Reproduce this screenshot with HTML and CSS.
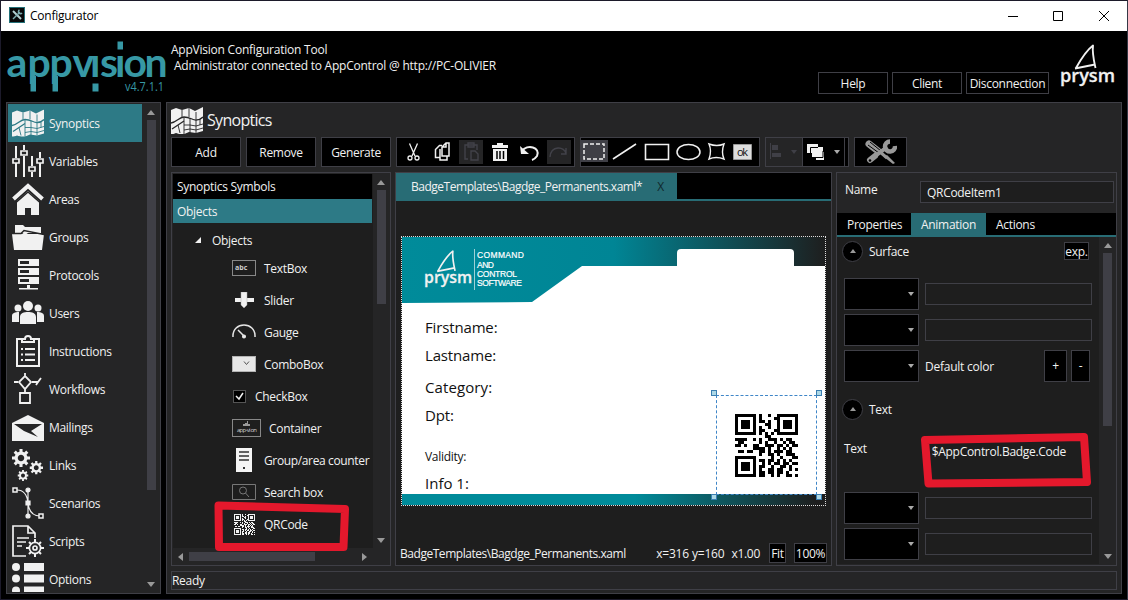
FILE: index.html
```html
<!DOCTYPE html>
<html lang="en">
<head>
<meta charset="utf-8">
<title>Configurator</title>
<link rel="stylesheet" href="styles.css">
</head>
<body>
<svg class="defs" width="0" height="0">
  <symbol id="map" viewBox="0 0 32 27">
    <path fill="#f1f1f1" d="M0 3 5 1l6 2 7-2 6 3 8-4v24l-7 2-7-1-7 3-6-2-5 2z"/>
    <path fill="none" stroke="var(--ink)" stroke-width="1.300" d="M0 16c6-1 8-6 13-6 6 0 8 3 12 3 3 0 5-1 7-3M1 22l12-8"/>
    <path fill="none" stroke="var(--ink)" stroke-width=".9" d="M11 3v7M18 1v9M25 5v7M13 10v17M19 11v15M25 13v13M13 18h6l6 1 7-2M13 23l6-1 6 1 7-2M29 12v6M7 18l2 8"/>
  </symbol>
  <symbol id="gear" viewBox="-10 -10 20 20">
    <circle r="5.400" fill="none" stroke="#f1f1f1" stroke-width="3.600"/>
    <path stroke="#f1f1f1" stroke-width="3.400" d="M0-10v4M0 6v4M-10 0h4M6 0h4M-7-7l3 3M4 4l3 3M7-7l-3 3M-4 4l-3 3"/>
  </symbol>
  <symbol id="prysm" viewBox="0 0 56 46">
    <path fill="none" stroke="#f1f1f1" stroke-width="1.900" stroke-linejoin="round" d="M16 24C21 15 27 6 33 1.500C32 9 34 17 35.500 24M15 24.500 35 20.500"/>
    <text x="0" y="38" textLength="55" lengthAdjust="spacingAndGlyphs" class="prysm-word">prysm</text>
  </symbol>
  <symbol id="tools" viewBox="0 0 32 26">
    <path stroke="currentColor" stroke-width="7" stroke-linecap="round" d="M4 5 13 12"/>
    <path stroke="#000" stroke-width="1" d="M3 6l11 8M5 3l11 9"/>
    <path stroke="currentColor" stroke-width="3" d="M14 12l8 7"/>
    <path fill="currentColor" d="m19 18 3-2 8 8-2 1z"/>
    <path stroke="currentColor" stroke-width="6" stroke-linecap="round" d="M5 21 10 17"/>
    <path stroke="currentColor" stroke-width="4" d="M9 18 22 8"/>
    <path fill="none" stroke="currentColor" stroke-width="4.500" d="M25 2.500a5 5 0 1 0 5 4.500"/>
    <circle cx="5" cy="21.500" r="1.300" fill="#000"/>
  </symbol>
</svg>
<div class="window">
  <header class="titlebar">
    <svg class="app-icon" width="16" height="16" viewBox="0 0 16 16"><rect width="16" height="16" fill="#237079"/><rect x="1" y="1" width="14" height="14" fill="#08090a"/><path stroke="#b5d2d4" stroke-width="2" d="m4 4 8 8"/><path stroke="#7cacb0" stroke-width="1.500" d="m4 12 7-7"/><path fill="none" stroke="#7cacb0" stroke-width="1.500" d="M10.500 3a2 2 0 1 0 2.500 3"/></svg>
    <span class="grow t-title">Configurator</span>
    <svg width="104" height="12" viewBox="0 0 104 12" fill="none" stroke="#000"><path d="M0 6.500h10M45.500 1.500h9v9h-9zM91 1l10 10M101 1 91 11"/></svg>
  </header>

  <div class="banner">
    <svg class="logo" width="160" height="56" viewBox="0 0 160 56">
      <text x="-1.500 19.500 41.500 64.500 82 92 107 115.500 136.500" y="38.500" class="logo-word">appvision</text>
      <path fill="#000" d="M82 0h11v16H82zM106 0h11v16h-11z"/>
      <path fill="#3798a5" d="M84.500 45.500h6v8h-6zM109.500 3.500h5.500v8h-5.500zM22.500 38h5.500v15.500h-5.500zM44.500 38h5.500v15.500h-5.500z"/>
      <text x="117" y="53" class="logo-version" textLength="39" lengthAdjust="spacingAndGlyphs">v4.7.1.1</text>
    </svg>
    <div class="banner-text grow"><div class="w-a">AppVision Configuration Tool</div><div class="w-b">Administrator connected to AppControl @ http://PC-OLIVIER</div></div>
    <div class="banner-buttons"><button>Help</button><button>Client</button><button class="wide">Disconnection</button></div>
    <svg class="prysm" width="56" height="46"><use href="#prysm"/></svg>
  </div>

  <div class="body">
    <nav class="sidebar">
      <ul class="menu">
        <li class="active"><svg viewBox="0 0 32 32"><use href="#map" y="2.500" width="32" height="27"/></svg>Synoptics</li>
        <li><svg viewBox="0 0 32 32" fill="none" stroke="#f1f1f1" stroke-width="2"><path d="M4 1v12M4 18v14M12 0v5M12 11v21M20 11v10M20 27v5M28 7v6M28 18v14"/><path stroke-width="1.700" d="M1 14h6v4H1zM9 6h6v4H9zM17 22h6v4h-6zM25 14h6v4h-6z"/></svg>Variables</li>
        <li><svg viewBox="0 0 32 32"><path fill="#f1f1f1" d="M5 18 16 8l11 10v14h-8v-7h-6v7H5z"/><path fill="none" stroke="#252526" stroke-width="1.500" d="M4 19.500 16 9l12 10.500"/><path fill="none" stroke="#f1f1f1" stroke-width="4" d="M1.500 16 16 3 30.500 16"/></svg>Areas</li>
        <li><svg viewBox="0 0 32 32" fill="#f1f1f1"><path d="M3 4h8l2 2h16v6H3z"/><path d="M0 13h10l3-2 3 2h16l-2 16H2z"/><path fill="none" stroke="#252526" stroke-width="1.500" d="M0 12.500h9l3-3 20 4"/></svg>Groups</li>
        <li><svg viewBox="0 0 32 32"><path fill="#f1f1f1" d="M6 0h21v7H6zM6 9h21v7H6zM6 18h21v7H6zM15 26h3v3h8v1.500H7V29h8z"/><path fill="#252526" d="M8 2h9v3H8zM8 11h9v3H8zM8 20h9v3H8z"/></svg>Protocols</li>
        <li><svg viewBox="0 0 32 32" fill="#f1f1f1"><circle cx="6" cy="11" r="3.500"/><circle cx="26" cy="11" r="3.500"/><circle cx="16" cy="9" r="5"/><path d="M0 25v-6c0-3 3-4 7-4v10zM25 25V15c4 0 7 1 7 4v6zM8 27v-7c0-4 4-5 8-5s8 1 8 5v7z"/></svg>Users</li>
        <li><svg viewBox="0 0 32 32" fill="none" stroke="#f1f1f1" stroke-width="2"><path d="M10 4H5v27h22V4h-5"/><path d="M10 7V4h3c0-4 6-4 6 0h3v3zM9 14h2M9 19.500h2M9 25h2M13 14h10M13 19.500h10M13 25h10"/></svg>Instructions</li>
        <li><svg viewBox="0 0 32 32" fill="none" stroke="#f1f1f1" stroke-width="1.800"><path d="M13 0v3M2 9h4M20 9h6l3-4M24 12l2-3M13 16v4M13 3l6 6-6 7-6-7zM8 20h10v10H8z"/></svg>Workflows</li>
        <li><svg viewBox="0 0 32 32" fill="#f1f1f1"><path d="M0 12 16 4l16 8v18H0z"/><path fill="#252526" d="M2 13h28L19 20l7 6-14-6z"/></svg>Mailings</li>
        <li><svg viewBox="0 0 32 32"><use href="#gear" width="18" height="18"/><use href="#gear" x="17.500" y="12" width="13.500" height="13.500"/><use href="#gear" x="5.500" y="21" width="11" height="11"/></svg>Links</li>
        <li><svg viewBox="0 0 32 32" fill="none" stroke="#f1f1f1" stroke-width="1.200"><path d="M5 3c6 0 10 4 11 13s5 13 12 13M16 3v27"/><path d="M1 1h4v4H1zM27 27h4v4h-4z" fill="#252526" stroke-width="1.500"/><g fill="#f1f1f1"><circle cx="16" cy="3" r="2"/><circle cx="16" cy="29" r="2"/><path d="M14 14h4v4h-4z"/></g></svg>Scenarios</li>
        <li><svg viewBox="0 0 32 32" fill="none" stroke="#f1f1f1" stroke-width="1.700"><path d="M14 31H1V1h15l7 7v5M16 1v7h7M5 13h12M5 17h9M5 21h5"/><circle cx="23" cy="23" r="5.600"/><circle cx="23" cy="23" r="2"/><path stroke-width="2" d="M23 14v3M23 29v3M14 23h3M29 23h3M17 17l2 2M27 27l2 2M29 17l-2 2M17 29l2-2"/></svg>Scripts</li>
        <li><svg viewBox="0 0 32 32" fill="#f1f1f1"><circle cx="4" cy="4" r="4"/><circle cx="4" cy="15.500" r="4"/><circle cx="4" cy="27.500" r="4"/><path d="M12 0h20v8H12zM12 11.500h20v8H12zM12 23.500h20v8H12z"/></svg>Options</li>
      </ul>
      <div class="vscroll"><i class="up"></i><b></b><i class="down"></i></div>
    </nav>

    <main class="main">
      <h1><svg width="32" height="27"><use href="#map"/></svg><span>Synoptics</span></h1>
      <div class="toolbar">
        <button class="cmd">Add</button><button class="cmd">Remove</button><button class="cmd">Generate</button>
        <svg class="group" width="179" height="30" viewBox="0 0 179 30" fill="none" stroke="#f1f1f1">
          <g stroke-width="1.300"><path d="M13.500 6.500 19 19M21.500 6.500 16 19"/><circle cx="14" cy="21" r="2"/><circle cx="21" cy="21" r="2"/></g>
          <g stroke-width="1.500"><path d="M44 20.500h-4.500v-8l4-4H46"/><path d="M46 19V10l4-4h3v13zM50 6.500V10h-4M44 12v11h7v-4"/></g>
          <path fill="#252526" stroke="none" d="M63 3h24v24H63zM151 3h24v24h-24z"/>
          <g stroke="#424249" stroke-width="1.400"><path d="M72 22h-3V8h12v5M72 10V6h6v4zM75 14h4l3 3v6h-7z"/><path d="M154 20c1-12 15-11 16-3m-5 0h5v-6"/></g>
          <path fill="#f1f1f1" stroke="none" d="M96 8h5V6h6v2h5v3H96zM97 12h14v12H97z"/><path stroke="#000" stroke-width="1.500" d="M101 14v8M104 14v8M107.500 14v8"/>
          <path stroke-width="2" d="M126 14c5-7 19-4 15 5q-2 3-5 4"/><path fill="#f1f1f1" stroke="none" d="m124 9 1 8h8z"/>
        </svg>
        <svg class="group" width="180" height="30" viewBox="0 0 180 30" fill="none" stroke="#f1f1f1">
          <path fill="#3f3f46" stroke="none" d="M1 3h27v22H1z"/><path stroke-width="1.500" stroke-dasharray="4 2" d="M4 7h20v15H4z"/>
          <path stroke-width="1.600" d="m33 22 23-15"/><path stroke-width="1.600" d="M65.500 7.500h23v15h-23z"/><ellipse cx="108.500" cy="15" rx="11.500" ry="7.500" stroke-width="1.500"/>
          <path stroke-width="1.400" d="M129 7q8 3 15 0-3 8 0 15-8-3-15 0 3-8 0-15z"/>
          <path fill="#ddd" stroke="#999" d="M153.500 7.500h18v15h-18z"/><text x="157" y="19" textLength="11" class="ok">ok</text>
        </svg>
        <svg class="group" width="84" height="30" viewBox="0 0 84 30">
          <path fill="#252526" d="M0 0h37v30H0z"/><path fill="#3f3f46" d="M37 0h1v30h-1zM79 0h1v30h-1zM5 6h1v16H5zM7 8h6v5H7zM7 16h9v4H7zM26 13h6l-3 4z"/>
          <path fill="#f1f1f1" d="M42 7h11v3h5v5h1v8h-8v-3h-4v-4h-5z"/><path fill="none" stroke="#000" d="M45.500 16v-5.500H53M50.500 20.500h7.500V14"/><path fill="#aaa" d="M69 13h6l-3 4z"/>
        </svg>
        <div class="group tools"><svg width="32" height="26"><use href="#tools"/></svg></div>
      </div>

      <div class="work">
        <section class="tree">
          <div class="tree-main">
            <div class="tree-head">Synoptics Symbols</div>
            <div class="tree-head sel">Objects</div>
            <div class="tree-root"><svg width="6" height="6"><path fill="#f1f1f1" d="M6 0v6H0z"/></svg>Objects</div>
            <ul class="items">
              <li><svg width="24" height="16"><rect x=".5" y=".5" width="23" height="15" fill="none" stroke="#888"/><text x="3" y="10" class="abc">abc</text></svg>TextBox</li>
              <li><svg width="24" height="16" fill="#f1f1f1"><path d="M3 6h19v4H3z"/><path stroke="#aaa" stroke-width=".5" d="M9 0h6v13l-3 3-3-3z"/></svg>Slider</li>
              <li><svg width="24" height="16" fill="none" stroke="#e5e5e5" stroke-width="1.500"><path d="M1 13C0-3 24-3 23 13M6 6l6 6"/><circle cx="12" cy="12.500" r="1.300" fill="#f1f1f1"/></svg>Gauge</li>
              <li><svg width="24" height="16"><rect x=".5" y=".5" width="23" height="15" fill="#e7e7e7" stroke="#b3b3b3"/><path fill="none" stroke="#555" d="m12 5.500 2.500 3 2.500-3"/></svg>ComboBox</li>
              <li class="check"><svg width="15" height="15"><rect x="1.500" y="1.500" width="12" height="12" fill="#000" stroke="#555"/><path fill="none" stroke="#f1f1f1" stroke-width="1.500" d="m4 7 3 3 4-6"/></svg>CheckBox</li>
              <li class="container"><svg width="29" height="18"><rect x=".5" y=".5" width="28" height="17" fill="none" stroke="#888"/><path fill="#999" d="M11 7v-2h2v-1h2V2h1v3h2v2z"/><text x="5" y="13" class="tiny" textLength="20">app-vi on</text></svg>Container</li>
              <li><svg width="24" height="24"><path fill="#f5f5f5" d="M4 0h16v24H4z"/><path stroke="#333" stroke-width="1.500" d="M7 4h10M7 8h10M7 12h10"/><path fill="#333" d="M11 19h2v2h-2z"/></svg>Group/area counter</li>
              <li><svg width="24" height="16" fill="none" stroke="#777"><path d="M.5.500h23v15H.5z"/><circle cx="11" cy="6.500" r="3.500"/><path d="m13.500 9 3.500 4"/></svg>Search box</li>
              <li><svg width="24" height="21" viewBox="0 0 24 21"><use href="#qr" x="2" y="0" width="21" height="21"/></svg>QRCode</li>
            </ul>
          </div>
          <div class="vscroll tree-v"><i class="up"></i><b></b><i class="down"></i></div>
          <div class="hscroll"><i class="left"></i><b></b><i class="right"></i></div>
        </section>

        <section class="editor">
          <div class="doc-tabs"><div class="doc-tab"><span>BadgeTemplates\Bagdge_Permanents.xaml*</span><em>X</em></div></div>
          <div class="canvas">
            <div class="badge">
              <svg class="badge-top" width="423" height="67" viewBox="0 0 423 67">
                <defs><linearGradient id="fade"><stop offset="0" stop-color="#008b9a"/><stop offset=".5" stop-color="#008595"/><stop offset="1" stop-color="#1e1e1e"/></linearGradient></defs>
                <path fill="url(#fade)" d="M0 0h424v29H180l-50 36-130 1z"/>
                <path fill="#fff" d="M275 30V16q0-4 4-4h109q4 0 4 4v14z"/>
                <use href="#prysm" x="22" y="12" width="49" height="42"/>
                <path stroke="#9fd0d6" d="M72.500 12v41"/>
                <g class="tagline"><text x="75" y="21" textLength="47">COMMAND</text><text x="75" y="30.500" textLength="17">AND</text><text x="75" y="39.500" textLength="40">CONTROL</text><text x="75" y="49" textLength="45">SOFTWARE</text></g>
              </svg>
              <div class="fields"><p>Firstname:</p><p>Lastname:</p><p class="cat">Category:</p><p>Dpt:</p><p class="small">Validity:</p><p class="info">Info 1:</p></div>
              <div class="strip"></div>
              <div class="qr-item">
                <svg width="63" height="63" viewBox="0 0 21 21" shape-rendering="crispEdges"><use href="#qr" width="21" height="21" class="qr-dark"/></svg>
                <i></i><i></i><i></i><i></i>
              </div>
            </div>
          </div>
          <div class="doc-status"><span class="grow path">BadgeTemplates\Bagdge_Permanents.xaml</span><span class="xy">x=316 y=160</span><span class="zoom">x1.00</span><button>Fit</button><button class="pct">100%</button></div>
        </section>

        <section class="props">
          <div class="name-row"><label>Name</label><div class="input">QRCodeItem1</div></div>
          <div class="tabs"><span>Properties</span><span class="on">Animation</span><span>Actions</span></div>
          <div class="prop-area">
            <div class="prop-list">
              <div class="sect"><i class="circle"></i><span class="grow">Surface</span><button>exp.</button></div>
              <div class="row first"><div class="combo"></div><div class="input"></div></div>
              <div class="row"><div class="combo"></div><div class="input"></div></div>
              <div class="row"><div class="combo"></div><span class="grow default">Default color</span><button class="plus">+</button><button class="minus">-</button></div>
              <div class="sect text"><i class="circle"></i><span>Text</span></div>
              <div class="text-row"><span>Text</span><span class="value">$AppControl.Badge.Code</span></div>
              <div class="row"><div class="combo"></div><div class="input"></div></div>
              <div class="row"><div class="combo"></div><div class="input"></div></div>
            </div>
            <div class="vscroll prop-v"><i class="up"></i><b></b><i class="down"></i></div>
          </div>
        </section>
      </div>
      <footer>Ready</footer>
    </main>
  </div>
</div>
<svg class="marks" width="1128" height="600" fill="none" stroke="#e4182c" stroke-width="8" stroke-linejoin="round"><path d="M218.500 505.500 345 509l-1.500 38H219z"/><path d="M925 440l159-3 3 45-158.500 1.500z"/></svg>
<svg class="defs" width="0" height="0"><symbol id="qr" viewBox="0 0 21 21"><g id="qr-cells"></g></symbol></svg>
<script src="qr.js"></script>
</body>
</html>
```
FILE: styles.css
```css
* { box-sizing: border-box; }
body { margin: 0; width: 1128px; height: 600px; overflow: hidden; background: #000; color: #f1f1f1; font: 12px/16px "Open Sans", "Noto Sans", sans-serif; letter-spacing: -0.3px; }
ul, p, h1 { margin: 0; padding: 0; list-style: none; font-weight: 400; }
button { background: #000; color: #f1f1f1; border: 1px solid #3f3f46; font: inherit; letter-spacing: inherit; padding: 0; }
svg { display: block; flex: none; }
.defs { position: absolute; }
.grow { flex: 1; }
.window { width: 1128px; height: 600px; border: 1px solid #1c1a2a; border-right-color: #353846; display: flex; flex-direction: column; }
.titlebar { height: 30px; background: #fff; color: #000; display: flex; align-items: center; gap: 5px; padding: 0 15px 1px 8px; }
.app-icon { margin-top: -1px; }
.t-title { letter-spacing: -0.25px; }
.banner { height: 71px; display: flex; }
.logo { margin: 7px 0 0 7px; overflow: visible; }
.logo-word { font: 700 41px Lato, sans-serif; letter-spacing: 0; fill: #3798a5; }
.logo-version { font-size: 12px; letter-spacing: 0; fill: #3798a5; }
.banner-text { padding: 11px 0 0 3px; letter-spacing: -0.23px; }
.w-b { padding-left: 3px; }
.banner-buttons { display: flex; gap: 4px; padding-top: 41px; }
.banner-buttons button { width: 70px; height: 22px; padding-top: 2px; }
.banner-buttons .wide { width: 83px; }
.prysm { margin: 13px 11px 0 11px; overflow: visible; }
.prysm-word { font: 600 18px "Open Sans", sans-serif; letter-spacing: 0; fill: #f1f1f1; stroke: #f1f1f1; stroke-width: .3; }
.body { display: flex; gap: 5px; padding-left: 5px; height: 492px; }
.sidebar { width: 155px; border: 1px solid #3f3f46; background: #252526; display: flex; padding: 1px; gap: 1px; }
.menu { width: 134px; flex: none; height: 488px; overflow: hidden; }
.menu li { height: 38px; display: flex; align-items: center; gap: 5px; padding: 1px 0 0 4px; --ink: #252526; }
.menu li svg { width: 32px; height: 32px; margin-top: -1px; }
.menu .active { background: #2d7a86; --ink: #2d7a86; }
.vscroll { width: 17px; display: flex; flex-direction: column; align-items: center; padding: 6px 0 5px; background: #252526; }
.vscroll b { width: 9px; height: 370px; margin-top: 5px; background: #3f3f46; }
.up, .down { border: 4.5px solid transparent; border-top: 0; border-bottom: 5px solid #999; }
.down { border-bottom: 0; border-top: 5px solid #999; margin-top: auto; }
.main { width: 956px; border: 1px solid #3f3f46; background: #252526; padding: 0 4px; --ink: #252526; }
h1 { height: 34px; display: flex; align-items: center; gap: 4px; font-size: 16px; letter-spacing: -0.55px; }
h1 span { letter-spacing: -0.7px; }
.toolbar { display: flex; gap: 5px; height: 30px; margin-bottom: 5px; }
.cmd { width: 70px; padding-top: 2px; }
.group { background: #000; outline: 1px solid #3f3f46; outline-offset: -1px; }
.tools { width: 53px; display: grid; place-items: center; color: #999; }
.ok { font: 11px "Open Sans", sans-serif; fill: #111; stroke: none; letter-spacing: 0; }
.work { display: flex; gap: 4px; height: 394px; }
.tree { width: 220px; border: 1px solid #3f3f46; padding: 1px 0 0 1px; display: grid; grid-template: 374px 17px / 200px 16px; }
.tree-main { background: #1e1e1e; overflow: hidden; }
.tree-head { height: 25px; width: 199px; background: #000; padding: 5px 4px; }
.sel { background: #2d7a86; height: 24px; }
.tree-root { display: flex; align-items: center; gap: 11px; height: 29px; padding: 6px 0 0 22px; }
.tree-root svg { margin-top: -2px; }
.items li { height: 32px; display: flex; align-items: center; gap: 8px; padding: 2px 0 0 59px; white-space: nowrap; }
.items li svg { margin-top: -2px; }
.items .check { gap: 8px; }
.items li:nth-child(7) { letter-spacing: -0.36px; }
.abc { font: 700 7px "Open Sans", sans-serif; letter-spacing: 0; fill: #ccc; }
.tiny { font: 6px "Open Sans", sans-serif; letter-spacing: 0; fill: #ccc; }
.tree-v { width: 16px; }
.tree-v b { height: 114px; }
.hscroll { display: flex; align-items: center; padding: 0 5px; }
.hscroll b { width: 126px; height: 9px; background: #3f3f46; margin-left: 6px; }
.left, .right { border: 4.5px solid transparent; border-left: 0; border-right: 5px solid #999; }
.right { border-right: 0; border-left: 5px solid #999; margin: 0 1px 0 auto; }
.editor { width: 437px; border: 1px solid #3f3f46; background: #1e1e1e; display: flex; flex-direction: column; }
.doc-tabs { height: 28px; background: #000; border-bottom: 2px solid #286c75; }
.doc-tab { width: 281px; height: 28px; background: #286c75; display: flex; align-items: center; justify-content: space-between; padding: 0 13px 0 15px; }
.doc-tab span { letter-spacing: -0.48px; }
.doc-tab em { font-style: normal; color: #10282c; }
.canvas { padding: 35px 4px 0 5px; height: 340px; }
.badge { position: relative; width: 425px; height: 270px; border: 1px dotted #ddd; background: #fff; background-clip: padding-box; }
.tagline { font: 8.5px "Liberation Sans", sans-serif; letter-spacing: 0; fill: #fff; stroke: #fff; stroke-width: .2; }
.fields { color: #111; font-size: 15px; height: 190px; padding: 9px 0 0 23px; letter-spacing: -0.15px; }
.fields p { height: 28px; line-height: 28px; }
.fields .cat { margin-top: 4px; letter-spacing: 0.1px; }
.fields .small { font-size: 12px; margin-top: 14px; letter-spacing: -0.3px; }
.fields .info { margin-top: -2px; letter-spacing: 0; }
.strip { height: 11px; background: linear-gradient(90deg, #008b9a 55%, #1e1e1e 98%); }
.qr-item { position: absolute; left: 314px; top: 158px; width: 101px; height: 100px; border: 1px dashed #3f86c8; padding: 18px; }
.qr-item i { position: absolute; width: 6px; height: 6px; background: #add8e6; border: 1px solid #3c7fb1; left: -6px; top: -6px; }
.qr-item i:nth-of-type(even) { left: 99px; }
.qr-item i:nth-of-type(n+3) { top: 98px; }
.qr-dark { --q: #000; }
.doc-status { display: flex; align-items: center; height: 24px; padding: 2px 4px 0; }
.doc-status button { width: 17px; height: 20px; margin-top: -2px; padding-top: 1px; }
.path { letter-spacing: -0.46px; }
.xy { letter-spacing: -0.18px; }
.zoom { margin: 0 9px 0 7px; }
.doc-status .pct { width: 33px; margin-left: 8px; }
.props { width: 281px; border: 1px solid #3f3f46; }
.name-row { height: 40px; display: flex; padding: 8px 2px 0 8px; }
.name-row label { width: 75px; padding-top: 1px; }
.input { flex: 1; height: 22px; border: 1px solid #3f3f46; background: #1e1e1e; padding: 3px 6px; }
.tabs { display: flex; height: 24px; background: #000; border-bottom: 2px solid #286c75; }
.tabs span { padding: 4px 0 0 10px; width: 74px; }
.tabs .on { background: #286c75; width: 75px; }
.prop-area { display: flex; height: 327px; }
.prop-list { width: 262px; background: #1e1e1e; padding: 3px 7px 0; }
.sect { display: flex; gap: 6px; align-items: center; height: 22px; margin-left: -2px; }
.sect span { padding-top: 2px; }
.circle { width: 21px; height: 21px; border-radius: 50%; border: 1px solid #3f3f46; background: #000; display: grid; place-items: center; }
.circle::after { content: ""; border: 3px solid transparent; border-top: 0; border-bottom: 4px solid #999; }
.sect button { width: 25px; height: 18px; line-height: 15px; margin-right: 3px; padding-top: 1px; }
.row { display: flex; align-items: center; gap: 6px; height: 32px; margin-bottom: 4px; }
.first { margin-top: 16px; }
.default { padding-top: 2px; letter-spacing: -0.25px; }
.combo { width: 75px; height: 32px; background: #000; border: 1px solid #3f3f46; display: flex; justify-content: flex-end; align-items: center; padding-right: 4px; }
.combo::after { content: ""; border: 3px solid transparent; border-bottom: 0; border-top: 4px solid #aaa; }
.plus { width: 23px; height: 32px; }
.minus { width: 19px; height: 32px; margin: 0 2px 0 -2px; }
.text { margin-top: 16px; }
.text-row { height: 72px; display: flex; padding-top: 21px; }
.value { margin: 3px 0 0 65px; }
.prop-v b { height: 173px; }
footer { height: 19px; border: 1px solid #3f3f46; margin-top: 5px; line-height: 17px; }
.marks { position: absolute; left: 0; top: 0; pointer-events: none; }
```
FILE: qr.js
```javascript
// Module rows of the badge QR code, one character per cell.
const rows = [
  "#######.#..#..#######",
  "#.....#.#....##.....#",
  "#.###.#.##.#..#.###.#",
  "#.###.#...##..#.###.#",
  "#.###.#.#..#..#.###.#",
  "#.....#.##...##.....#",
  "#######.#.#.#.#######",
  "..........##.........",
  "####..#.#..###.#.##..",
  ".##.....#.#..#..#.##.",
  "##.#..##..###.##.#.##",
  "......####.#..#.#.#..",
  ".##.##..##.#.###.##..",
  "........#..##.#..###.",
  "#######.....#..#...##",
  "#.....#.##.##.#.#.#..",
  "#.###.#..#.#.##.##.##",
  "#.###.#.##..#..##.#..",
  "#.###.#.#..##.##..#.#",
  "#.....#.##.##.##.#...",
  "#######.##..#.#..##.#"
];
let d = "";
rows.forEach((row, y) => [...row].forEach((c, x) => { if (c === "#") d += `M${x} ${y}h1v1h-1z`; }));
const path = document.createElementNS("http://www.w3.org/2000/svg", "path");
path.setAttribute("d", d);
path.setAttribute("style", "fill: var(--q, #f1f1f1)");
path.setAttribute("shape-rendering", "crispEdges");
document.getElementById("qr-cells").append(path);
```
